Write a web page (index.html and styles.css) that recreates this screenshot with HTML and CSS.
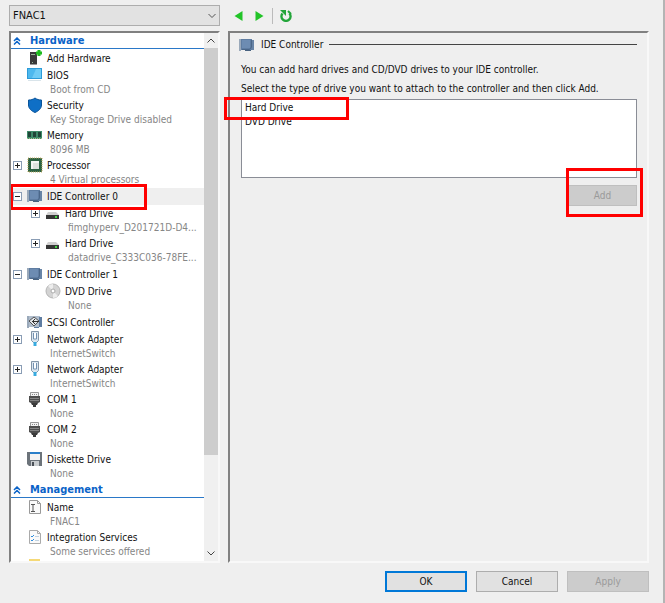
FILE: index.html
```html
<!DOCTYPE html>
<html lang="en">
<head>
    <meta charset="UTF-8">
    <meta name="viewport" content="width=device-width, initial-scale=1.0">
    <title>Settings for FNAC1</title>
    <link rel="stylesheet" href="styles.css">
</head>
<body>
    <!-- Icon set -->
    <svg class="defs" aria-hidden="true">
        <symbol id="i-add" viewBox="0 0 16 16">
            <path d="M3 2h7v12l-1 1H4l-1-1z" fill="#3a3a3a"/>
            <path d="M4 4.500h4M5 12.500h1" stroke="#9ab59a"/>
            <path d="M4 14.500h5" stroke="#999"/>
            <path d="M12 0v6M9 3h6" stroke="#1dbb1d" stroke-width="3"/>
        </symbol>
        <symbol id="i-bios" viewBox="0 0 16 16">
            <path d="M0 1h15v11H0z" fill="#2c9bd8"/>
            <path d="M1 2h13v9H1z" fill="#4db8ee"/>
            <path d="M9 2h5v9H5z" fill="#6fcbf5"/>
            <path d="M1 13.500h13" stroke="#d9e4ea"/>
        </symbol>
        <symbol id="i-shield" viewBox="0 0 16 16">
            <path d="M8 1c2 1.500 4 2 6.500 2v5c0 3.500-3 6-6.500 7.500C4.500 14 1.500 11.500 1.500 8V3C4 3 6 2.500 8 1z" fill="#0f6fc6" stroke="#0a5499"/>
        </symbol>
        <symbol id="i-memory" viewBox="0 0 16 16">
            <path d="M0 4h15v8H0z" fill="#3c8a68"/>
            <path d="M1 5h3v5H1zM6 5h3v5H6zM11 5h3v5h-3z" fill="#1f4538"/>
            <path d="M0 11.500h15" stroke="#a8bf8c" stroke-dasharray="1 1"/>
        </symbol>
        <symbol id="i-cpu" viewBox="0 0 16 16">
            <path d="M1 1h14v14H1z" fill="#2c6243" stroke="#bda860" stroke-dasharray="1 1"/>
            <path d="M2 2h12v12H2z" fill="#2c6243"/>
            <path d="M4 4h8v8H4z" fill="#f4f5f4"/>
            <path d="M6 6h6v6H6z" fill="#dde1de"/>
        </symbol>
        <symbol id="i-card" viewBox="0 0 16 16">
            <path d="M0 2h2v12H0z" fill="#9aa9ba"/>
            <path d="M2 2h11v11H2z" fill="#5f7da2"/>
            <path d="M3 3h8v8H3z" fill="#6d8cb2"/>
            <path d="M13 3h2v10h-2z" fill="#6884a6"/>
            <path d="M6 13h6v1H6z" fill="#48627f"/>
            <path d="M12.500 3v7l-2 2.500H3" fill="none" stroke="#4b6789"/>
        </symbol>
        <symbol id="i-scsi" viewBox="0 0 16 16">
            <path d="M0 2h2v12H0z" fill="#9aa9ba"/>
            <path d="M2 2h11v11H2z" fill="#b0bdcc"/>
            <path d="M13 3h2v10h-3v1H7v-1h5V3z" fill="#5f7da2"/>
            <path d="M7 3l5 4-5 5-5-5z" fill="#e4e7ea" stroke="#555"/>
            <path d="M12 7.500H5M8 5L5.500 7.500 8 10" fill="none" stroke="#333"/>
        </symbol>
        <symbol id="i-drive" viewBox="0 0 16 16">
            <path d="M3 7h8l3 3H1z" fill="#d0d0d0"/>
            <path d="M1 10h13v4H1z" fill="#363636"/>
            <path d="M10 12h2" stroke="#42d642" stroke-width="2"/>
        </symbol>
        <symbol id="i-disc" viewBox="0 0 16 16">
            <circle cx="8" cy="8" r="7" fill="#d3d3d3" stroke="#b5b5b5"/>
            <path d="M8 8L3 3a7 7 0 0 1 5-2zM8 8l5 5a7 7 0 0 1-5 2z" fill="#ededed"/>
            <circle cx="8" cy="8" r="2" fill="#fff" stroke="#aaa"/>
        </symbol>
        <symbol id="i-net" viewBox="0 0 16 16">
            <path d="M4.500.5h7v9l-2 2h-3l-2-2z" fill="#dce6ef" stroke="#8395a8"/>
            <path d="M6.500 2v6h3V2" fill="#fff" stroke="#7290b0"/>
            <path d="M8 11v4" stroke="#38aadf" stroke-width="3"/>
        </symbol>
        <symbol id="i-com" viewBox="0 0 16 16">
            <path d="M3.500 1.500h8v4h-8z" fill="#f2f2f2" stroke="#999"/>
            <path d="M5 3.500h6" stroke="#888" stroke-dasharray="1 1"/>
            <path d="M2 5h11v6l-2 1H4l-2-1z" fill="#4e4e4e"/>
            <path d="M3 7.500h9M3 9.500h9" stroke="#858585"/>
            <path d="M4 12h7l-1 2H5zM6 14h3v2H6z" fill="#3b3b3b"/>
        </symbol>
        <symbol id="i-floppy" viewBox="0 0 16 16">
            <path d="M0 1h15v14H2l-2-2z" fill="#6c737a"/>
            <path d="M3 1h10v8H3z" fill="#f3f3f3"/>
            <path d="M3 1h10v2H3z" fill="#2a7fc9"/>
            <path d="M4 10h8v5H4z" fill="#c9cdd0"/>
            <path d="M5 11h2v4H5z" fill="#4a5057"/>
        </symbol>
        <symbol id="i-name" viewBox="0 0 16 16">
            <path d="M2.500 1.500h8l3 3v10h-11z" fill="#fafafa" stroke="#999"/>
            <path d="M10.500 1.500v3h3" fill="none" stroke="#999"/>
            <path d="M4 5.500h4M4 12.500h4M6 5.500v7" stroke="#555"/>
        </symbol>
        <symbol id="i-services" viewBox="0 0 16 16">
            <path d="M2.500 1.500h8l3 3v10h-11z" fill="#fafafa" stroke="#aaa"/>
            <path d="M10.500 1.500v3h3" fill="none" stroke="#aaa"/>
            <path d="M4 7l1 1 2-2M4 11l1 1 2-2" fill="none" stroke="#2f8ede"/>
            <path d="M8 7.500h4M8 11.500h4" stroke="#c2d2e0"/>
        </symbol>
        <symbol id="i-folder" viewBox="0 0 16 16">
            <path d="M2 0h11v14H2z" fill="#f5d977"/>
        </symbol>
        <symbol id="i-down" viewBox="0 0 10 10">
            <path d="M1.500 3L5 6.500 8.500 3" fill="none" stroke="currentColor"/>
        </symbol>
        <symbol id="i-collapse" viewBox="0 0 8 8">
            <path d="M1 4l3-3 3 3M1 7.500l3-3 3 3" fill="none" stroke="#0a63c8" stroke-width="1.500"/>
        </symbol>
    </svg>

    <main class="window">
        <header class="toolbar">
            <div class="vm-picker">
                <select class="vm-select" aria-label="Virtual machine">
                    <option>FNAC1</option>
                </select>
                <svg class="vm-arrow"><use href="#i-down"/></svg>
            </div>
            <div class="tools">
                <button class="tool" aria-label="Back"><svg viewBox="0 0 10 12"><path d="M9 1v10L1 6z" fill="#22c428"/></svg></button>
                <button class="tool" aria-label="Forward"><svg viewBox="0 0 10 12"><path d="M1 1v10l8-5z" fill="#22c428"/></svg></button>
                <span class="divider"></span>
                <button class="tool refresh" aria-label="Refresh"><svg viewBox="0 0 12 12"><path d="M2.500 3.500a4.500 4.500 0 1 0 7 0" fill="none" stroke="#23a53a" stroke-width="2.500"/><path d="M0 0h6v6z" fill="#23a53a"/><path d="M8 1l3 3" stroke="#23a53a" stroke-width="2"/></svg></button>
            </div>
        </header>

        <div class="panes">
            <nav class="tree-pane" aria-label="Settings">
                <div class="tree">
                    <section class="category">
                        <h2><svg><use href="#i-collapse"/></svg>Hardware</h2>
                        <ul>
                            <li class="device"><svg class="icon"><use href="#i-add"/></svg><a href="#">Add Hardware</a></li>
                            <li class="device"><svg class="icon"><use href="#i-bios"/></svg><a href="#">BIOS</a><small>Boot from CD</small></li>
                            <li class="device"><svg class="icon"><use href="#i-shield"/></svg><a href="#">Security</a><small>Key Storage Drive disabled</small></li>
                            <li class="device"><svg class="icon"><use href="#i-memory"/></svg><a href="#">Memory</a><small>8096 MB</small></li>
                            <li class="device"><button class="expander" aria-label="Expand Processor"></button><svg class="icon"><use href="#i-cpu"/></svg><a href="#">Processor</a><small>4 Virtual processors</small></li>
                            <li class="group">
                                <div class="device selected"><button class="expander open" aria-label="Collapse IDE Controller 0"></button><svg class="icon"><use href="#i-card"/></svg><a href="#">IDE Controller 0</a><span class="mark mark-controller"></span></div>
                                <ul class="children">
                                    <li class="device"><button class="expander" aria-label="Expand Hard Drive"></button><svg class="icon"><use href="#i-drive"/></svg><a href="#">Hard Drive</a><small>fimghyperv_D201721D-D4...</small></li>
                                    <li class="device"><button class="expander" aria-label="Expand Hard Drive"></button><svg class="icon"><use href="#i-drive"/></svg><a href="#">Hard Drive</a><small>datadrive_C333C036-78FE...</small></li>
                                </ul>
                            </li>
                            <li class="group">
                                <div class="device"><button class="expander open" aria-label="Collapse IDE Controller 1"></button><svg class="icon"><use href="#i-card"/></svg><a href="#">IDE Controller 1</a></div>
                                <ul class="children">
                                    <li class="device"><svg class="icon"><use href="#i-disc"/></svg><a href="#">DVD Drive</a><small>None</small></li>
                                </ul>
                            </li>
                            <li class="device"><svg class="icon"><use href="#i-scsi"/></svg><a href="#">SCSI Controller</a></li>
                            <li class="device"><button class="expander" aria-label="Expand Network Adapter"></button><svg class="icon"><use href="#i-net"/></svg><a href="#">Network Adapter</a><small>InternetSwitch</small></li>
                            <li class="device"><button class="expander" aria-label="Expand Network Adapter"></button><svg class="icon"><use href="#i-net"/></svg><a href="#">Network Adapter</a><small>InternetSwitch</small></li>
                            <li class="device"><svg class="icon"><use href="#i-com"/></svg><a href="#">COM 1</a><small>None</small></li>
                            <li class="device"><svg class="icon"><use href="#i-com"/></svg><a href="#">COM 2</a><small>None</small></li>
                            <li class="device"><svg class="icon"><use href="#i-floppy"/></svg><a href="#">Diskette Drive</a><small>None</small></li>
                        </ul>
                    </section>
                    <section class="category">
                        <h2><svg><use href="#i-collapse"/></svg>Management</h2>
                        <ul>
                            <li class="device"><svg class="icon"><use href="#i-name"/></svg><a href="#">Name</a><small>FNAC1</small></li>
                            <li class="device"><svg class="icon"><use href="#i-services"/></svg><a href="#">Integration Services</a><small>Some services offered</small></li>
                            <li class="device"><svg class="icon"><use href="#i-folder"/></svg></li>
                        </ul>
                    </section>
                </div>
                <div class="scrollbar">
                    <svg class="flip"><use href="#i-down"/></svg>
                    <div class="thumb"></div>
                    <svg><use href="#i-down"/></svg>
                </div>
            </nav>

            <section class="detail">
                <h1><svg class="icon"><use href="#i-card"/></svg>IDE Controller</h1>
                <p>You can add hard drives and CD/DVD drives to your IDE controller.</p>
                <p><label for="drive-type">Select the type of drive you want to attach to the controller and then click Add.</label></p>
                <div class="list-wrap">
                    <select class="drive-list" id="drive-type" size="5">
                        <option>Hard Drive</option>
                        <option>DVD Drive</option>
                    </select>
                    <span class="mark mark-drive"></span>
                </div>
                <div class="add-row">
                    <button class="btn add" disabled>Add</button>
                    <span class="mark mark-add"></span>
                </div>
            </section>
        </div>

        <footer class="actions">
            <button class="btn default">OK</button>
            <button class="btn">Cancel</button>
            <button class="btn" disabled>Apply</button>
        </footer>
    </main>
</body>
</html>
```
FILE: styles.css
```css
* {
    margin: 0;
    padding: 0;
    box-sizing: border-box;
}

body {
    background-color: #efefef;
    color: #111;
    font: 10px/17px "DejaVu Sans Condensed", "DejaVu Sans", sans-serif;
}

button,
select {
    font: inherit;
    color: inherit;
    border-radius: 0;
}

ul {
    list-style: none;
}

.defs {
    position: absolute;
    width: 0;
    height: 0;
}

.window {
    display: flex;
    flex-direction: column;
    height: 100vh;
    padding: 5px 14px 11px 9px;
    border-right: 2px solid #b4b4b4;
}

/* Top bar */
.toolbar {
    display: flex;
    gap: 8px;
    height: 21px;
    margin-bottom: 5px;
}

.vm-picker {
    position: relative;
    width: 211px;
}

.vm-select {
    appearance: none;
    width: 100%;
    height: 21px;
    padding-left: 3px;
    background-color: #e2e2e2;
    border: 1px solid #adadad;
    font-size: 11px;
}

.vm-arrow {
    position: absolute;
    right: 3px;
    top: 6px;
    width: 10px;
    height: 10px;
    color: #555;
}

.tools {
    display: flex;
    align-items: center;
    gap: 10px;
    padding-left: 5px;
}

.tool {
    width: 11px;
    height: 12px;
    background: none;
    border: none;
}

.tool svg {
    display: block;
    width: 100%;
    height: 100%;
}

.refresh {
    width: 12px;
}

.divider {
    width: 1px;
    height: 16px;
    background-color: #bbb;
}

.refresh,
.divider {
    margin-left: -3px;
}

/* Panes */
.panes {
    display: flex;
    gap: 8px;
    flex: 1;
    min-height: 0;
}

.tree-pane,
.detail {
    border: 2px solid;
    border-color: #808080 #f8f8f8 #f8f8f8 #808080;
}

.tree-pane {
    display: flex;
    width: 211px;
    background-color: #fff;
}

.tree {
    flex: 1;
    overflow: hidden;
}

.category {
    margin-bottom: 1px;
}

.category h2 {
    display: flex;
    align-items: center;
    gap: 9px;
    height: 16px;
    margin-bottom: 1px;
    padding-left: 2px;
    border-bottom: 1px solid #2a78c8;
    color: #0a63c8;
    font-size: 11px;
    line-height: 15px;
}

.category h2 svg {
    width: 8px;
    height: 8px;
}

.device {
    position: relative;
    display: grid;
    grid-template-columns: 10px 16px 1fr;
    column-gap: 4px;
    padding-left: 2px;
    white-space: nowrap;
}

.device .icon {
    grid-column: 2;
    grid-row: 1;
}

.device a {
    grid-column: 3;
    color: inherit;
    text-decoration: none;
}

.device small {
    grid-column: 3;
    padding: 0 0 2px 3px;
    color: #868686;
    font-size: 10px;
    line-height: 11px;
}

.icon {
    width: 16px;
    height: 16px;
}

.selected {
    background-color: #efefef;
}

.group {
    margin: 1px 0;
}

.children {
    padding-left: 18px;
}

.expander {
    grid-column: 1;
    grid-row: 1;
    width: 9px;
    height: 9px;
    margin-top: 4px;
    border: 1px solid #8a9db5;
    background: linear-gradient(#222, #222) center / 5px 1px no-repeat, linear-gradient(#222, #222) center / 1px 5px no-repeat, #fff;
}

.expander.open {
    background: linear-gradient(#222, #222) center / 5px 1px no-repeat, #fff;
}

.scrollbar {
    display: flex;
    flex-direction: column;
    align-items: center;
    width: 14px;
    background-color: #f0f0f0;
    color: #444;
}

.scrollbar svg {
    width: 10px;
    height: 15px;
}

.scrollbar .thumb {
    width: 100%;
    height: 77%;
    margin-bottom: auto;
    flex: none;
    background-color: #cdcdcd;
}

.flip {
    transform: rotate(180deg);
}

/* Right side */
.detail {
    flex: 1;
    min-width: 0;
    padding: 3px 10px 0 11px;
}

.detail h1 {
    display: flex;
    align-items: center;
    gap: 6px;
    margin: 0 0 8px -2px;
    font-size: 10px;
    font-weight: normal;
}

.detail h1::after {
    content: "";
    flex: 1;
    height: 1px;
    background-color: #444;
}

.detail p {
    margin-bottom: 2px;
    white-space: nowrap;
}

.list-wrap,
.add-row {
    position: relative;
}

.drive-list {
    display: block;
    width: 100%;
    height: 79px;
    padding: 2px 1px;
    overflow: hidden;
    background-color: #fff;
    border: 1px solid #8a8d96;
}

.drive-list option {
    min-height: 14px;
    padding: 0 2px;
    line-height: 14px;
}

.add-row {
    display: flex;
    justify-content: flex-end;
    padding-top: 7px;
}

.btn {
    width: 82px;
    height: 21px;
    background-color: #e1e1e1;
    border: 1px solid #adadad;
    line-height: 17px;
}

.btn:disabled {
    background-color: #ccc;
    border-color: #bfbfbf;
    color: #9a9a9a;
}

.btn.default {
    border: 2px solid #0078d7;
}

.btn.add {
    width: 69px;
}

.actions {
    display: flex;
    justify-content: flex-end;
    gap: 9px;
    padding-top: 8px;
}

/* Red call-outs */
.mark {
    position: absolute;
    border: 3px solid #f00;
    pointer-events: none;
}

.mark-controller {
    top: -4px;
    left: -1px;
    width: 137px;
    height: 26px;
    z-index: 1;
}

.mark-drive {
    top: -2px;
    left: -17px;
    width: 125px;
    height: 23px;
}

.mark-add {
    top: -10px;
    right: -6px;
    width: 77px;
    height: 49px;
}
```
